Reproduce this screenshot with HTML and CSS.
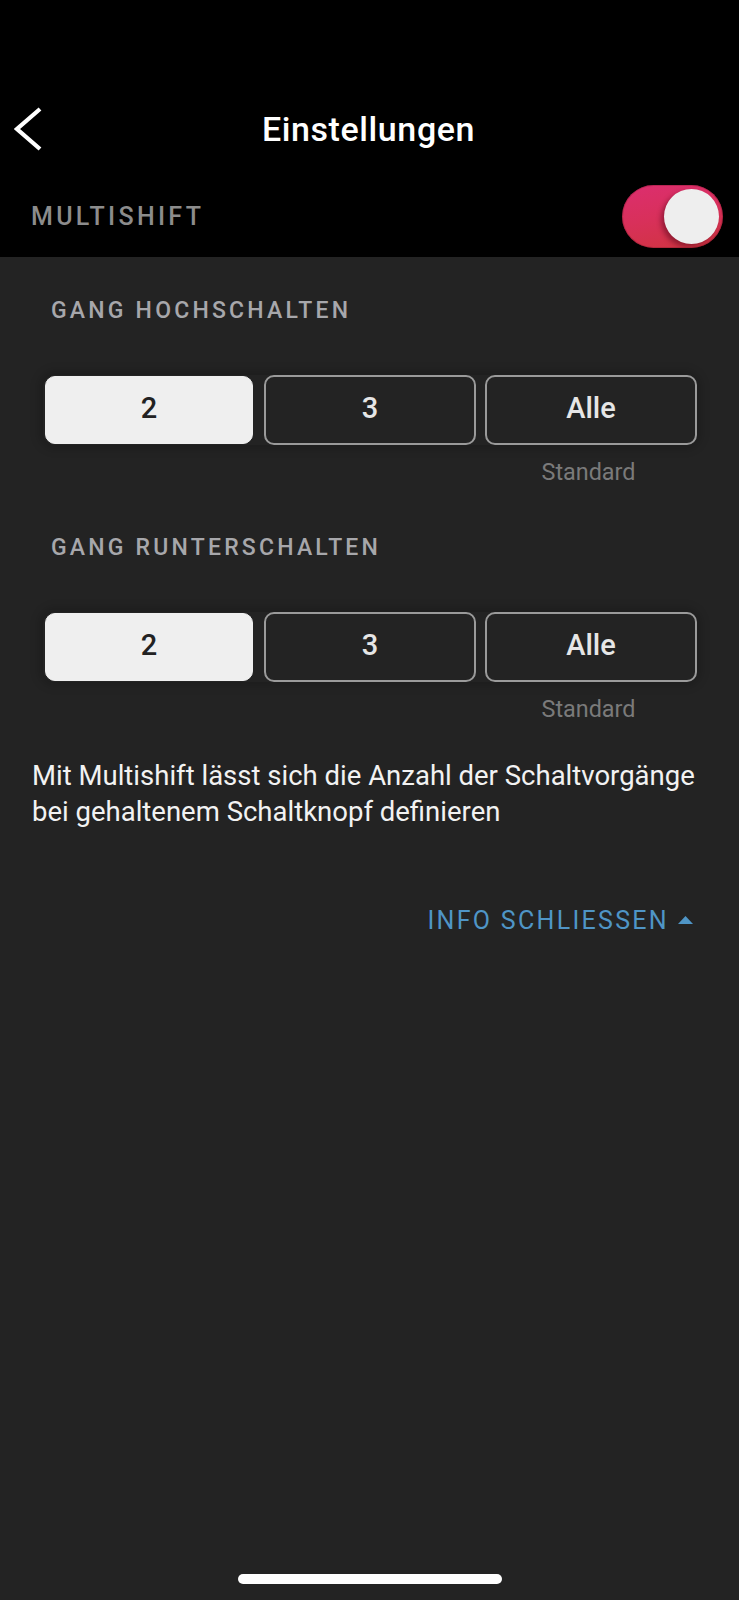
FILE: index.html
```html
<!DOCTYPE html>
<html lang="de">
<head>
<meta charset="utf-8">
<title>Einstellungen</title>
<link rel="stylesheet" href="styles.css">
</head>
<body>
<div class="screen">
  <header class="header">
    <div class="nav">
      <button class="back" aria-label="Zurück">
        <svg width="30" height="44" viewBox="0 0 30 44"><polyline points="26,2 3,22 26,42" fill="none" stroke="#ffffff" stroke-width="4.2" stroke-linejoin="miter"/></svg>
      </button>
      <h1 class="title">Einstellungen</h1>
      <span></span>
    </div>
    <div class="setting-row">
      <span class="setting-label">MULTISHIFT</span>
      <span class="toggle"><span class="knob"></span></span>
    </div>
  </header>

  <main class="content">
    <section class="group">
      <h2 class="group-label">GANG HOCHSCHALTEN</h2>
      <div class="segments">
        <button class="seg seg-active">2</button>
        <button class="seg">3</button>
        <button class="seg">Alle</button>
      </div>
      <div class="hints"><span></span><span></span><span class="hint">Standard</span></div>
    </section>

    <section class="group">
      <h2 class="group-label">GANG RUNTERSCHALTEN</h2>
      <div class="segments">
        <button class="seg seg-active">2</button>
        <button class="seg">3</button>
        <button class="seg">Alle</button>
      </div>
      <div class="hints"><span></span><span></span><span class="hint">Standard</span></div>
    </section>

    <p class="info">Mit Multishift lässt sich die Anzahl der Schaltvorgänge bei gehaltenem Schaltknopf definieren</p>

    <div class="info-toggle">
      <span class="info-link">INFO SCHLIESSEN</span>
      <svg class="caret" width="15" height="8" viewBox="0 0 15 8"><polygon points="0,8 7.5,0 15,8" fill="#4f95c6"/></svg>
    </div>
  </main>

  <div class="home-indicator"></div>
</div>
</body>
</html>
```

FILE: styles.css
```css
* { box-sizing: border-box; }

html, body {
  margin: 0;
  padding: 0;
  background: #232323;
}

body {
  font-family: Roboto, "Noto Sans", "Liberation Sans", sans-serif;
  color: #f0f0f0;
}

.screen {
  position: relative;
  width: 739px;
  height: 1600px;
  background: #232323;
  overflow: hidden;
}

.header {
  background: #000;
  padding: 100px 16px 9px 14px;
}

.nav {
  display: grid;
  grid-template-columns: 1fr auto 1fr;
  align-items: center;
  height: 58px;
}

.back {
  background: none;
  border: 0;
  padding: 0;
  width: 30px;
  height: 44px;
  display: flex;
  align-items: center;
  cursor: pointer;
}

.title {
  margin: 0;
  font-size: 34px;
  font-weight: 500;
  letter-spacing: 0.6px;
  line-height: 40px;
  color: #fff;
  text-align: center;
}

.setting-row {
  margin-top: 27px;
  height: 63px;
  display: flex;
  align-items: center;
  justify-content: space-between;
  padding-left: 17px;
}

.setting-label {
  font-size: 25px;
  font-weight: 500;
  letter-spacing: 3.3px;
  color: #8c8c8c;
  line-height: 30px;
}

.toggle {
  position: relative;
  width: 101px;
  height: 63px;
  border-radius: 32px;
  background: linear-gradient(170deg, #dc2e6f 0%, #d8305a 50%, #cf343f 100%);
  box-shadow: inset 0 0 0 1px rgba(120, 20, 40, 0.35);
}

.knob {
  position: absolute;
  right: 4px;
  top: 4px;
  width: 55px;
  height: 55px;
  border-radius: 50%;
  background: #eeeeee;
  box-shadow: -3px 3px 5px rgba(70, 0, 20, 0.45);
}

.content {
  padding: 40px 12px 0 32px;
}

.group + .group {
  margin-top: 49px;
}

.group-label {
  margin: 0 0 50px 19px;
  font-size: 23px;
  font-weight: 500;
  letter-spacing: 3.2px;
  line-height: 28px;
  color: #a7a7ab;
}

.segments {
  display: grid;
  grid-template-columns: repeat(3, 1fr);
  gap: 9px;
  margin: 0 30px 0 11px;
  border-radius: 12px;
  box-shadow: 0 0 10px 4px rgba(0, 0, 0, 0.18);
}

.seg {
  height: 70px;
  border: 2px solid #9a9a9a;
  border-radius: 10px;
  background: #232323;
  color: #e6e6e6;
  font-family: Roboto, "Noto Sans", "Liberation Sans", sans-serif;
  font-size: 29px;
  font-weight: 500;
  padding: 0 0 4px 0;
}

.seg-active {
  background: #efefef;
  border: 1px solid #efefef;
  margin: 1px 2px;
  height: 68px;
  color: #222;
}

.hints {
  display: grid;
  grid-template-columns: repeat(3, 1fr);
  gap: 9px;
  margin: 15px 30px 0 11px;
}

.hint {
  text-align: center;
  font-size: 23.4px;
  line-height: 25px;
  color: #7a7a7a;
  padding-right: 5px;
}

.info {
  margin: 36px 0 0 0;
  font-size: 27.5px;
  line-height: 36px;
  color: #f2f2f2;
}

.info-toggle {
  margin: 77px 34px 0 0;
  display: flex;
  justify-content: flex-end;
  align-items: center;
  gap: 9px;
  height: 28px;
}

.info-link {
  font-size: 25px;
  letter-spacing: 2.3px;
  line-height: 28px;
  color: #4f95c6;
}

.caret {
  margin-top: -2px;
}

.home-indicator {
  position: absolute;
  left: 238px;
  bottom: 16px;
  width: 264px;
  height: 10px;
  border-radius: 5px;
  background: #fff;
}
```
